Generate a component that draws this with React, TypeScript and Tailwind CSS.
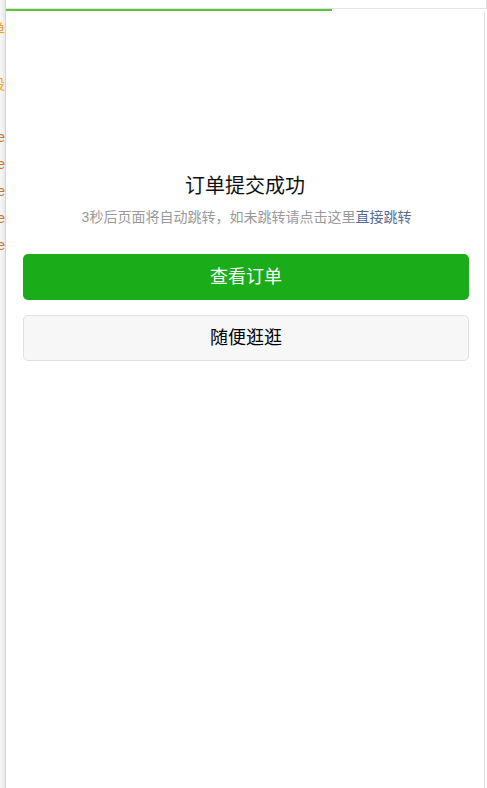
const cjk = { fontFamily: '"Liberation Sans", "Noto Sans CJK SC", sans-serif' };

const App = () => {
  return (
    <div className="flex h-[788px] w-[487px] bg-white overflow-hidden" style={cjk}>
      {/* page underneath, mostly hidden */}
      <div className="w-[5px] shrink-0 flex flex-col items-end overflow-hidden bg-gradient-to-r from-[#f8f8f8] to-[#e9e9e9] text-[14px] leading-[20px]">
        <div className="mt-[19px] whitespace-nowrap text-[#f0a020]">订单</div>
        <div className="mt-[35px] whitespace-nowrap text-[#f0a020]">收货设</div>
        <div className="mt-[30px] flex flex-col items-end text-[#c27a3a] leading-[27px]">
          <span className="whitespace-nowrap">name</span>
          <span className="whitespace-nowrap">name</span>
          <span className="whitespace-nowrap">name</span>
          <span className="whitespace-nowrap">name</span>
          <span className="whitespace-nowrap">name</span>
        </div>
      </div>

      <div className="w-[482px] shrink-0 flex flex-col border-l border-[#d5d5d5]">
        <div className="h-[8px] border-r border-[#dcdcdc]"></div>
        <div className="h-px bg-[#e3e3e3]"></div>
        <div className="h-[2px]">
          <div className="h-full w-[326px] bg-[#5ac43a]"></div>
        </div>

        <div className="flex-1 w-[479px] border-r border-[#e2e2e2] pt-[161px]">
          <h2 className="text-center text-[20px] leading-[28px] text-[#111] font-normal">订单提交成功</h2>
          <p className="mt-[7px] pl-[3px] text-center text-[14px] leading-[20px] text-[#999]">
            3秒后页面将自动跳转，如未跳转请点击这里<span className="text-[#576b95]">直接跳转</span>
          </p>

          <div className="mt-[27px] ml-[17px] w-[446px] flex flex-col gap-[15px]">
            <button className="h-[46px] rounded-[5px] bg-[#1aad19] text-white text-[18px]">查看订单</button>
            <button className="h-[46px] rounded-[5px] bg-[#f7f7f7] border border-[#e0e0e0] text-black text-[18px]">随便逛逛</button>
          </div>
        </div>
      </div>
    </div>
  );
};

export default App;
